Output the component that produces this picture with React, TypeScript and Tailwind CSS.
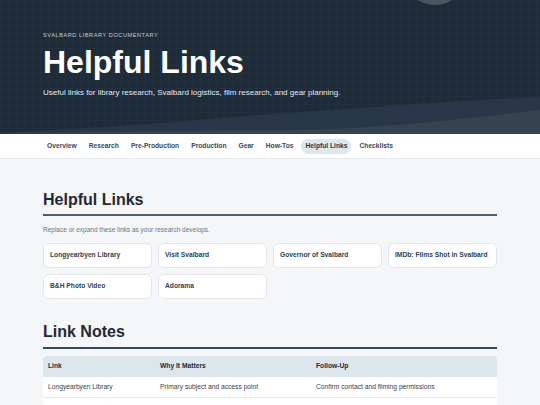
const NAV = ["Overview", "Research", "Pre-Production", "Production", "Gear", "How-Tos", "Helpful Links", "Checklists"];

const LINKS = [
  "Longyearbyen Library",
  "Visit Svalbard",
  "Governor of Svalbard",
  "IMDb: Films Shot in Svalbard",
  "B&H Photo Video",
  "Adorama",
];

const NOTES = [
  { link: "Longyearbyen Library", why: "Primary subject and access point", next: "Confirm contact and filming permissions" },
  { link: "Visit Svalbard", why: "Travel and logistics planning", next: "Book transport and lodging" },
];

const App = () => {
  return (
    <div className="min-h-screen bg-[#f4f6f8] font-['Liberation_Sans',Arial,sans-serif]">
      <header className="relative h-[134px] overflow-hidden bg-[#1e2c3a] bg-[linear-gradient(rgba(255,255,255,0.02)_1px,transparent_1px),linear-gradient(90deg,rgba(255,255,255,0.02)_1px,transparent_1px)] bg-[size:8px_8px]">
        <div className="absolute left-[404px] top-[-57px] h-[62px] w-[62px] rounded-full bg-[#4a5561]" />
        <svg className="absolute bottom-0 left-0" width="540" height="60" viewBox="0 0 540 60" preserveAspectRatio="none">
          <path d="M0 59 C 60 56, 130 52, 210 45 C 290 38, 330 37, 400 31 C 460 27, 500 25, 540 23 L540 60 L0 60 Z" fill="#29384a" opacity="0.9" />
          <path d="M0 60 C 80 58, 180 57, 290 56 C 380 55, 460 45, 540 36 L540 60 Z" fill="#35434f" />
        </svg>
        <div className="relative mx-auto w-[454px] pt-[31px]">
          <p className="text-[5.6px] leading-[8px] tracking-[0.1em] uppercase text-[#c3ccd5]">Svalbard Library Documentary</p>
          <h1 className="mt-[5px] text-[32px] leading-[36px] font-bold text-white">Helpful Links</h1>
          <p className="mt-[7px] text-[8px] leading-[12px] text-[#e2e8f0]">
            Useful links for library research, Svalbard logistics, film research, and gear planning.
          </p>
        </div>
      </header>

      <nav className="h-[25px] bg-white border-b border-[#e6e9ec]">
        <div className="mx-auto flex h-full w-[454px] items-center gap-[4px]">
          {NAV.map((item) => (
            <span
              key={item}
              className={`flex h-[15px] items-center rounded-full px-[4px] text-[6.7px] font-bold ${
                item === "Helpful Links" ? "bg-[#dce7ee] text-[#24394b]" : "text-[#3a4856]"
              }`}
            >
              {item}
            </span>
          ))}
        </div>
      </nav>

      <main className="mx-auto w-[454px] pt-[31px] pb-[20px]">
        <h2 className="border-b-2 border-[#4b5d6e] pb-[4px] text-[16px] leading-[20px] font-bold text-[#1f2933]">Helpful Links</h2>
        <p className="mt-[9px] text-[6.5px] leading-[10px] text-[#6b7682]">Replace or expand these links as your research develops.</p>
        <div className="mt-[8px] grid grid-cols-4 gap-[6px]">
          {LINKS.map((l) => (
            <div
              key={l}
              className="flex h-[25px] items-center whitespace-nowrap rounded-[6px] border border-[#e3e7eb] bg-white px-[6px] text-[6.7px] font-bold text-[#2e3f50]"
            >
              {l}
            </div>
          ))}
        </div>

        <h2 className="mt-[23px] border-b-2 border-[#34495a] pb-[4.5px] text-[16px] leading-[20px] font-bold text-[#1f2933]">Link Notes</h2>
        <div className="mt-[7px] overflow-hidden rounded-[4px] bg-white">
          <table className="w-full text-left text-[6.7px]">
            <thead>
              <tr className="h-[21px] bg-[#dbe7ec] text-[#1f2933]">
                <th className="w-[112px] px-[5px] font-bold">Link</th>
                <th className="w-[156px] px-[5px] font-bold">Why It Matters</th>
                <th className="px-[5px] font-bold">Follow-Up</th>
              </tr>
            </thead>
            <tbody>
              {NOTES.map((n) => (
                <tr key={n.link} className="h-[21px] border-b border-[#e8ebee] text-[#37424d]">
                  <td className="px-[5px]">{n.link}</td>
                  <td className="px-[5px]">{n.why}</td>
                  <td className="px-[5px]">{n.next}</td>
                </tr>
              ))}
            </tbody>
          </table>
        </div>
      </main>
    </div>
  );
};

export default App;
